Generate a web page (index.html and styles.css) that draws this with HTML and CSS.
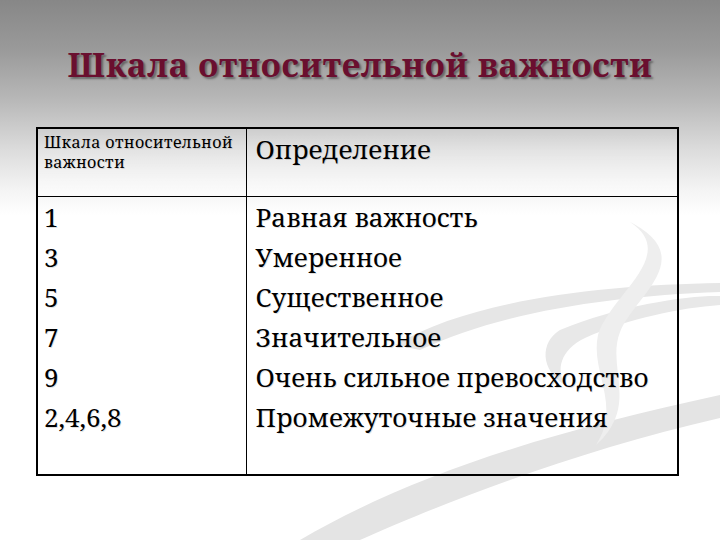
FILE: index.html
```html
<!DOCTYPE html>
<html>
<head>
<meta charset="utf-8">
<title>Шкала относительной важности</title>
<link rel="stylesheet" href="styles.css">
</head>
<body>
<div class="slide">
  <svg class="swirl" width="720" height="540" viewBox="0 0 720 540" aria-hidden="true">
    <path d="M300 540 C420 470 560 430 720 395 L720 418 C580 450 450 500 360 540 Z" fill="#e4e4e4"/>
    <path d="M395 345 C470 300 600 285 720 283 L720 292 C610 296 500 312 420 350 Z" fill="#e6e6e6"/>
    <path d="M560 330 C620 305 690 295 720 296 L720 305 C680 308 630 318 585 338 C560 350 556 370 565 385 C540 370 540 342 560 330 Z" fill="#e8e8e8"/>
    <path d="M630 222 C680 255 610 295 598 335 C590 372 622 405 596 445 C640 405 606 368 620 332 C634 296 700 258 630 222 Z" fill="#eeeeee"/>
  </svg>
  <h1 class="title">Шкала относительной важности</h1>
  <table class="scale">
    <thead>
      <tr>
        <th class="col-a small">Шкала относительной важности</th>
        <th class="col-b big">Определение</th>
      </tr>
    </thead>
    <tbody>
      <tr>
        <td class="col-a list">
          <div>1</div><div>3</div><div>5</div><div>7</div><div>9</div><div>2,4,6,8</div>
        </td>
        <td class="col-b list">
          <div>Равная важность</div>
          <div>Умеренное</div>
          <div>Существенное</div>
          <div>Значительное</div>
          <div>Очень сильное превосходство</div>
          <div>Промежуточные значения</div>
        </td>
      </tr>
    </tbody>
  </table>
</div>
</body>
</html>
```

FILE: styles.css
```css
html, body {
  margin: 0;
  padding: 0;
}
body {
  width: 720px;
  height: 540px;
  overflow: hidden;
  background: #fff;
}
.slide {
  position: relative;
  width: 720px;
  height: 540px;
  background: linear-gradient(to bottom, #878787 0px, #9a9a9a 50px, #b8b8b8 100px, #dcdcdc 150px, #f4f4f4 190px, #ffffff 215px);
  font-family: "Noto Serif", serif;
  color: #000;
  overflow: hidden;
}
.swirl {
  position: absolute;
  left: 0;
  top: 0;
  z-index: 0;
}
.title {
  position: relative;
  z-index: 1;
  margin: 0;
  padding-top: 45px;
  height: 84px;
  box-sizing: border-box;
  text-align: center;
  font-family: "Noto Serif", serif;
  font-weight: bold;
  font-size: 33px;
  line-height: 40px;
  color: #6a0f2f;
  text-shadow: 2px 2px 2px rgba(40, 40, 40, 0.5);
  letter-spacing: 0.7px;
}
.scale {
  position: relative;
  z-index: 1;
  margin: 43px 0 0 36px;
  width: 643px;
  border-collapse: collapse;
  border: 2px solid #000;
}
.scale th, .scale td {
  box-sizing: border-box;
  border: 1px solid #000;
  padding: 0;
  text-align: left;
  vertical-align: top;
  font-family: "Noto Serif", serif;
  font-weight: normal;
  text-shadow: 1px 1px 0 rgba(0, 0, 0, 0.12);
}
.scale thead th {
  height: 68px;
  background: linear-gradient(to bottom, rgba(255,255,255,0) 0, rgba(255,255,255,0.6) 100%);
}
.col-a {
  width: 209px;
  padding-left: 6px !important;
}
.col-b {
  padding-left: 9px !important;
}
.small {
  font-size: 16px;
  line-height: 20px;
  padding-top: 3px !important;
  letter-spacing: 0.4px;
}
.big {
  font-size: 26px;
  line-height: 34px;
  padding-top: 3px !important;
  letter-spacing: 0;
}
.scale tbody td {
  height: 279px;
}
.list {
  font-size: 26px;
  line-height: 40px;
  padding-top: 0 !important;
  letter-spacing: 0;
}
```
